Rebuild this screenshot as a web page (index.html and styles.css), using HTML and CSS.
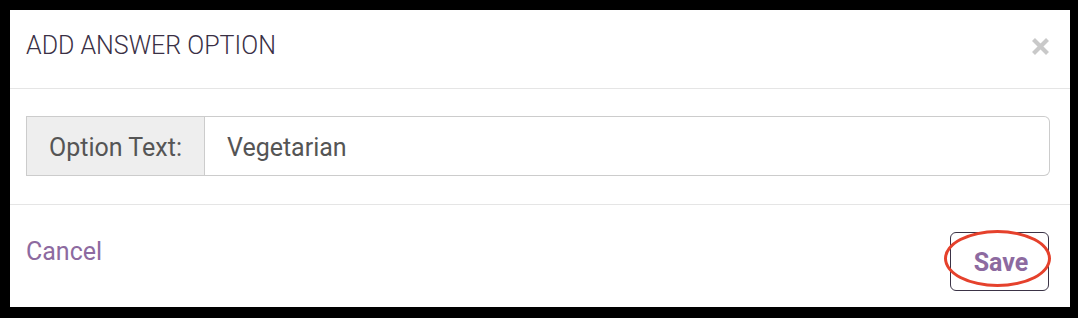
FILE: index.html
```html
<!DOCTYPE html>
<html>
<head>
<meta charset="utf-8">
<link rel="stylesheet" href="styles.css">
</head>
<body>
<div class="modal">
  <div class="modal-header">
    <h4 class="modal-title">ADD ANSWER OPTION</h4>
    <svg class="close" width="19" height="17" viewBox="0 0 19 17"><path d="M2.5 1.5 L16.5 15.5 M16.5 1.5 L2.5 15.5" stroke="#c9c9c9" stroke-width="4.2" stroke-linecap="butt"/></svg>
  </div>
  <div class="modal-body">
    <div class="input-group">
      <span class="addon">Option Text:</span>
      <div class="input">Vegetarian</div>
    </div>
  </div>
  <div class="modal-footer">
    <a class="cancel">Cancel</a>
    <div class="save-wrap">
      <button class="save">Save</button>
      <span class="circle"></span>
    </div>
  </div>
</div>
</body>
</html>
```
FILE: styles.css
```css
html, body { margin: 0; padding: 0; }
body {
  background: #000;
  width: 1078px;
  height: 318px;
  padding: 10px 8px 11px 10px;
  box-sizing: border-box;
  font-family: Roboto, "Liberation Sans", sans-serif;
}
.modal {
  background: #fff;
  width: 1060px;
  height: 297px;
  display: flex;
  flex-direction: column;
}
.modal-header {
  height: 79px;
  border-bottom: 1px solid #e5e5e5;
  display: flex;
  align-items: center;
  justify-content: space-between;
  padding: 0 20px 8px 16px;
  box-sizing: border-box;
}
.modal-title {
  margin: 0;
  font-weight: 300;
  font-size: 25px;
  color: #3a3045;
}
.close {
  display: block;
  margin-top: 2px;
}
.modal-body {
  height: 116px;
  padding: 27px 20px 0 16px;
  box-sizing: border-box;
  border-bottom: 1px solid #e5e5e5;
}
.input-group {
  display: flex;
  height: 60px;
}
.addon {
  background: #eee;
  border: 1px solid #ccc;
  width: 179px;
  box-sizing: border-box;
  display: flex;
  align-items: center;
  justify-content: center;
  font-size: 25px;
  color: #555;
  padding-top: 2px;
}
.input {
  flex: 1;
  border: 1px solid #ccc;
  border-left: none;
  border-radius: 0 6px 6px 0;
  display: flex;
  align-items: center;
  padding-left: 22px;
  font-size: 25px;
  color: #555;
  padding-top: 2px;
}
.modal-footer {
  flex: 1;
  display: flex;
  justify-content: space-between;
  padding: 0 21px 0 16px;
}
.cancel {
  color: #8d6aa0;
  font-size: 25px;
  margin-top: 32px;
}
.save-wrap {
  position: relative;
  margin-top: 27px;
}
.save {
  width: 99px;
  height: 59px;
  border: 1px solid #3b3346;
  border-radius: 6px;
  background: #fff;
  color: #8d6aa0;
  font-family: Roboto, "Liberation Sans", sans-serif;
  font-weight: bold;
  font-size: 25px;
  padding: 2px 0 0 3px;
}
.circle {
  position: absolute;
  left: -6px;
  top: -2px;
  width: 107px;
  height: 57px;
  border: 3px solid #e5412c;
  border-radius: 50%;
  box-sizing: border-box;
}
```
